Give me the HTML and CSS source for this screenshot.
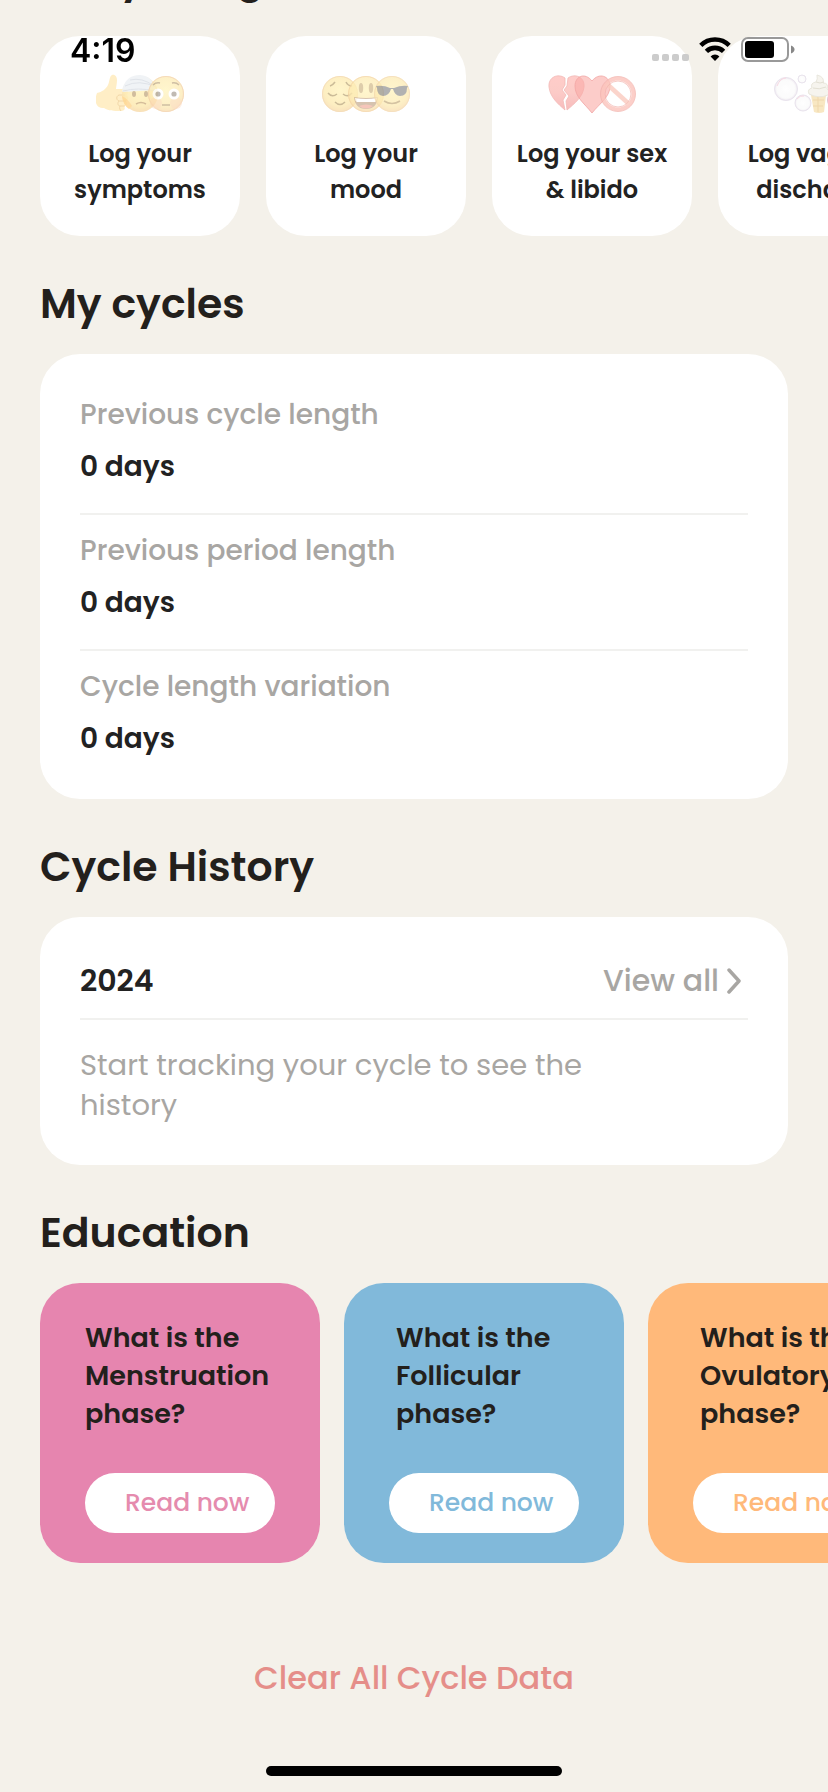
FILE: index.html
```html
<!DOCTYPE html>
<html lang="en">
<head>
<meta charset="utf-8">
<meta name="viewport" content="width=device-width">
<title>Cycle tracker</title>
<link rel="stylesheet" href="styles.css">
</head>
<body>
<header class="status-bar">
  <span class="status-time">4:19</span>
  <div class="status-icons">
    <svg class="icon-signal" viewBox="0 0 37 8" aria-hidden="true"><rect width="7" height="7" rx="2"/><rect x="10" width="7" height="7" rx="2"/><rect x="20" width="7" height="7" rx="2"/><rect x="30" width="7" height="7" rx="2"/></svg>
    <svg class="icon-wifi" viewBox="0 0 32 25" aria-hidden="true"><g fill="none" stroke="#000" stroke-width="4.6"><path d="M1.800 8.400a20.200 20.200 0 0 1 28.400 0"/><path d="M7.400 14.400a12.200 12.200 0 0 1 17.200 0"/></g><path d="M16 24l-4.400-4.600a6.200 6.200 0 0 1 8.800 0z"/></svg>
    <svg class="icon-battery" viewBox="0 0 54 26" aria-hidden="true"><rect x="1" y="2" width="46" height="23" rx="6" fill="none" stroke="#999" stroke-width="2"/><rect x="4" y="5" width="29" height="17" rx="3"/><path d="M50 9.500q3.500 1.500 3.500 4t-3.500 4z" fill="#888"/></svg>
  </div>
</header>

<main class="page">
  <section class="section">
    <h2 class="heading heading-top">Daily things</h2>
    <div class="log-row">
      <button class="log-card" type="button">
        <svg class="emoji" viewBox="0 0 88 40" aria-hidden="true">
          <defs>
            <radialGradient id="face" cx=".5" cy=".4" r=".62"><stop offset="0" stop-color="#fff0a8"/><stop offset=".7" stop-color="#fde49a"/><stop offset="1" stop-color="#f5cd90"/></radialGradient>
            <linearGradient id="heart" x1="0" y1="0" x2="0" y2="1"><stop offset="0" stop-color="#ffb5b0"/><stop offset=".5" stop-color="#fbb3ae"/><stop offset="1" stop-color="#f59c9c"/></linearGradient>
            <radialGradient id="bubble"><stop offset="0" stop-color="#fff"/><stop offset=".8" stop-color="#fafafa"/><stop offset="1" stop-color="#e9e2ec"/></radialGradient>
          </defs>
          <g>
            <path d="M1 19c5-1 9-4 11-8 2-4 1-8 4-10 3-1 5 2 5 5 0 4-1 7-1 9h8c5 0 5 5 2 6 3 1 3 5 0 6 2 2 1 5-2 5 2 3 0 5-3 5-8 0-12 0-17-3-5 0-7-2-8-5q-1-5 1-10z" fill="#ffe9b4"/>
            <path d="M29 21h-6c-3 1-3 5 0 6h7M23 27c-2 2-1 5 1 5h5M24 32c-1 2 0 4 1 5" fill="none" stroke="#eec98a"/>
          </g>
          <g opacity=".85">
            <circle cx="44" cy="20" r="18" fill="url(#face)"/>
            <path d="M26 16q0 2 1 2l33-2q-3-14-16-15-14 0-18 15z" fill="#e9edf2"/>
            <path d="M29 12q14-7 31 1M34 6q12-3 24 6M27 17q15-4 32 0" fill="none" stroke="#cfd5de"/>
            <path d="M26 22q6 3 10 10l-3 3q-6-4-7-13z" fill="#ffcb70"/>
            <ellipse cx="38" cy="20" rx="2" ry="3" fill="#b89a68"/><ellipse cx="50" cy="20" rx="2" ry="3" fill="#b89a68"/>
            <path d="M40 30q5-3 10 0" fill="none" stroke="#bf9a62" stroke-width="1.500"/>
          </g>
          <g opacity=".75">
            <circle cx="70" cy="20" r="18" fill="url(#face)"/><circle cx="70" cy="20" r="17.500" fill="none" stroke="#eebd86"/>
            <circle cx="60" cy="29" r="6" fill="#fbc19a" opacity=".5"/><circle cx="80" cy="29" r="6" fill="#fbc19a" opacity=".5"/>
            <circle cx="62" cy="20" r="5.500" fill="#fff"/><circle cx="78" cy="20" r="5.500" fill="#fff"/>
            <circle cx="62" cy="20" r="2.600" fill="#8f8579"/><circle cx="78" cy="20" r="2.600" fill="#8f8579"/>
            <path d="M57 11q3-3 7-2M76 9q4-1 7 2M66 31h8" fill="none" stroke="#a98d5d" stroke-width="1.500"/>
          </g>
        </svg>
        <span>Log your symptoms</span>
      </button>
      <button class="log-card" type="button">
        <svg class="emoji" viewBox="0 0 88 40" aria-hidden="true">
          <g opacity=".8">
            <circle cx="18" cy="20" r="18" fill="url(#face)"/><circle cx="18" cy="20" r="17.500" fill="none" stroke="#efc990"/>
            <path d="M6 19q4 5 9 1M21 20q5 4 9-1M13 28q5 5 10 0M8 12q3-1 5-4M24 8q2 4 6 4" fill="none" stroke="#a98f55" stroke-width="1.500"/>
          </g>
          <g opacity=".75">
            <circle cx="44" cy="20" r="18" fill="url(#face)"/><circle cx="44" cy="20" r="17.500" fill="none" stroke="#efc27f"/>
            <ellipse cx="39" cy="14" rx="2.200" ry="5" fill="#c6a76b"/><ellipse cx="49" cy="14" rx="2.200" ry="5" fill="#c6a76b"/>
            <path d="M32 23q12 2 24 0-1 12-12 12T32 23z" fill="#b89672"/><path d="M33 24q11 2 22 0-1 4-2 4H35q-2-1-2-4z" fill="#fff"/><path d="M37 32q7-3 14 0-7 5-14 0z" fill="#ee9c85"/>
          </g>
          <g opacity=".75">
            <circle cx="70" cy="20" r="18" fill="url(#face)"/><circle cx="70" cy="20" r="17.500" fill="none" stroke="#efc990"/>
            <path d="M54 12q8-1 14 2h4q7-3 14-2l-1 2q0 8-7 8-5 0-7-7h-2q-2 7-8 7-6-1-6-8z" fill="#767676"/>
            <path d="M62 27q8 5 16 0" fill="none" stroke="#b4955a" stroke-width="1.500"/>
          </g>
        </svg>
        <span>Log your mood</span>
      </button>
      <button class="log-card" type="button">
        <svg class="emoji" viewBox="0 0 88 40" aria-hidden="true">
          <g fill="url(#heart)" stroke="#ee9995" stroke-width=".8" opacity=".9">
            <path d="M17 4C10-1 0 3 1 13c1 10 9 17 16 23l-2-10 3-5-4-5 3-5z"/>
            <path d="M19 36c7-6 16-13 17-23C37 3 27-1 20 4l-1 8-3 4 5 6-3 5z"/>
          </g>
          <path d="M44 7C37-2 27 2 27 12c0 11 9 17 17 27 8-10 18-16 18-27C62 2 51-2 44 7z" fill="#f98d89" fill-opacity=".6" stroke="#ee8885" stroke-width=".8"/>
          <g fill="none" opacity=".8"><circle cx="70" cy="20" r="15.500" stroke="#fbb0a6" stroke-width="4"/><path d="M59 10l22 20" stroke="#fab9a9" stroke-width="4.500"/><circle cx="70" cy="20" r="17.500" stroke="#ed948b" stroke-width=".8"/><circle cx="70" cy="20" r="13" stroke="#ed948b" stroke-width=".8"/></g>
        </svg>
        <span>Log your sex &amp; libido</span>
      </button>
      <button class="log-card" type="button">
        <svg class="emoji" viewBox="0 0 88 40" aria-hidden="true">
          <g fill="url(#bubble)" stroke="#e3dce8"><circle cx="12" cy="15" r="11.500"/><circle cx="29" cy="29" r="8"/><circle cx="28" cy="5" r="4"/></g>
          <path d="M3 12q3-8 9-8M23 25q3-4 7-3" fill="none" stroke="#f6cdd9"/>
          <path d="M37 21h15l-2 17q-5 2-10 0z" fill="#f6dfae"/><path d="M39 26h11M39 32h10M44 22v16" stroke="#eacb91"/>
          <path d="M35 20q-2-5 3-6-2-5 4-6 2-3 1-7 8 2 6 8 6 0 4 6 4 2 1 6-9 4-19-1z" fill="#f3f1e9" stroke="#e2dfd2"/>
          <path d="M39 14q6 2 13-1M42 8q4 2 8 0" fill="none" stroke="#d9d5c5"/>
          <circle cx="62" cy="26" r="9" fill="#d7aebb"/><circle cx="76" cy="26" r="9" fill="#d7aebb"/><path d="M62 17q8-12 14 0" fill="none" stroke="#b9cfa2" stroke-width="2"/>
        </svg>
        <span>Log vaginal discharge</span>
      </button>
    </div>
  </section>

  <section class="section">
    <h2 class="heading">My cycles</h2>
    <dl class="card stats">
      <div class="stat"><dt>Previous cycle length</dt><dd>0 days</dd></div>
      <div class="stat"><dt>Previous period length</dt><dd>0 days</dd></div>
      <div class="stat"><dt>Cycle length variation</dt><dd>0 days</dd></div>
    </dl>
  </section>

  <section class="section">
    <h2 class="heading">Cycle History</h2>
    <div class="card history">
      <div class="history-head">
        <h3 class="history-year">2024</h3>
        <a class="view-all" href="#history">View all
          <svg class="icon-chevron" viewBox="0 0 14 26" aria-hidden="true"><path d="M2 2l10 11L2 24" fill="none" stroke="currentColor" stroke-width="3.500" stroke-linecap="round" stroke-linejoin="round"/></svg>
        </a>
      </div>
      <p class="history-empty">Start tracking your cycle to see the history</p>
    </div>
  </section>

  <section class="section">
    <h2 class="heading">Education</h2>
    <div class="edu-row">
      <article class="edu-card pink"><h3 class="edu-title">What is the Menstruation phase?</h3><button class="edu-button" type="button">Read now</button></article>
      <article class="edu-card blue"><h3 class="edu-title inset">What is the Follicular phase?</h3><button class="edu-button" type="button">Read now</button></article>
      <article class="edu-card orange"><h3 class="edu-title inset">What is the Ovulatory phase?</h3><button class="edu-button" type="button">Read now</button></article>
    </div>
  </section>

  <button class="clear" type="button">Clear All Cycle Data</button>
</main>
<div class="home-indicator"></div>
</body>
</html>
```

FILE: styles.css
```css
* { box-sizing: border-box; margin: 0; }

body {
  background: #f4f1ea;
  color: #23201c;
  font-family: Poppins, Inter, "Liberation Sans", sans-serif;
  overflow-x: hidden;
}

button { border: 0; font: inherit; color: inherit; cursor: pointer; }
svg { display: block; flex: none; }

.status-bar {
  position: fixed;
  top: 0;
  left: 0;
  right: 0;
  z-index: 2;
  display: flex;
  justify-content: space-between;
  padding: 30px 33px 0 70px;
  color: #000;
}
.status-time { font: 600 32px/41px Inter, sans-serif; }
.status-icons { display: flex; align-items: flex-end; gap: 10px; height: 32px; }
.icon-signal { width: 37px; height: 8px; fill: #ccc; }
.icon-wifi { width: 32px; height: 25px; }
.icon-battery { width: 54px; height: 26px; }

.page {
  display: flex;
  flex-direction: column;
  gap: 38px;
  margin-top: -52px;
  padding: 0 40px 89px;
}

.section { display: flex; flex-direction: column; gap: 20px; }
.heading { font-size: 41px; line-height: 60px; font-weight: 600; }
.heading-top { margin-bottom: 8px; }

.log-row, .edu-row {
  display: flex;
  margin-right: -40px;
  overflow: hidden;
}
.log-row { gap: 26px; }
.log-card {
  flex: 0 0 200px;
  display: flex;
  flex-direction: column;
  align-items: center;
  gap: 22px;
  padding: 38px 20px 28px;
  border-radius: 40px;
  background: #fff;
  color: #222;
  font-size: 24px;
  line-height: 36px;
  font-weight: 600;
}
.emoji { width: 88px; height: 40px; opacity: 0.75; }

.card { border-radius: 40px; background: #fff; color: #222; font-size: 28px; }

.stats { padding: 26px 40px 15px; }
.stat {
  display: flex;
  flex-direction: column;
  gap: 8px;
  padding: 13px 0 24px;
  line-height: 44px;
}
.stat + .stat { padding-top: 14px; border-top: 2px solid #f1f1ef; }
.stat:last-child { padding-bottom: 23px; }
.stat dt { color: #a8a6a3; font-weight: 500; }
.stat dd { font-weight: 600; }

.history { padding: 40px; }
.history-head {
  display: flex;
  justify-content: space-between;
  padding: 2px 7px 15px 0;
  border-bottom: 2px solid #f1f1ef;
  line-height: 44px;
}
.history-year { font-size: 30px; font-weight: 600; }
.view-all {
  display: flex;
  align-items: center;
  gap: 8px;
  color: #a8a6a3;
  font-size: 30px;
  font-weight: 500;
  text-decoration: none;
}
.icon-chevron { width: 14px; height: 26px; }
.history-empty {
  max-width: 540px;
  padding-top: 25px;
  color: #a8a6a3;
  font-size: 29px;
  line-height: 40px;
}

.edu-row { gap: 24px; }
.edu-card {
  flex: 0 0 280px;
  display: flex;
  flex-direction: column;
  gap: 40px;
  padding: 36px 45px 30px;
  border-radius: 40px;
}
.edu-title { font-size: 27px; line-height: 38px; font-weight: 600; }
.edu-title.inset { padding-left: 7px; }
.edu-button {
  height: 60px;
  padding: 0 0 0 40px;
  border-radius: 30px;
  background: #fff;
  font-size: 25px;
  font-weight: 500;
  text-align: left;
}
.pink { background: #e685af; }
.pink .edu-button { color: #e58bae; }
.blue { background: #81b9da; }
.blue .edu-button { color: #81b9da; }
.orange { background: #ffb97a; }
.orange .edu-button { color: #ffb97a; }

.clear {
  align-self: center;
  margin-top: 53px;
  padding: 0;
  background: none;
  color: #e58e89;
  font-size: 32px;
  line-height: 48px;
  font-weight: 500;
}

.home-indicator {
  position: fixed;
  bottom: 16px;
  left: 50%;
  width: 296px;
  height: 10px;
  margin-left: -148px;
  border-radius: 5px;
  background: #000;
}
```
